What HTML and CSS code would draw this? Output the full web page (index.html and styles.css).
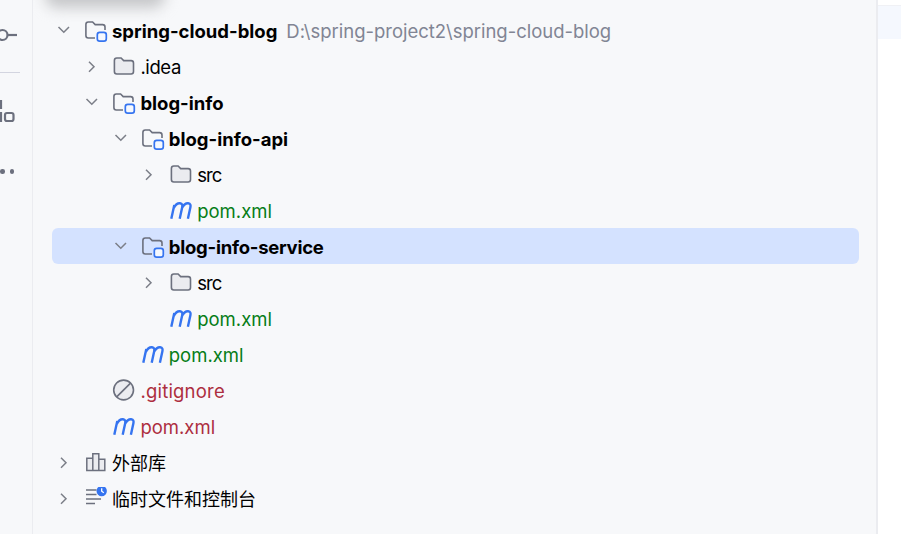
FILE: index.html
```html
<!DOCTYPE html>
<html lang="zh">
<head>
<meta charset="utf-8">
<title>Project</title>
<link rel="stylesheet" href="styles.css">
</head>
<body>
<svg class="defs" width="0" height="0">
  <defs>
    <symbol id="chev-down" viewBox="0 0 24 24"><path d="M6.500 8l5.300 5.300L17 8" fill="none" stroke="#7c7f88" stroke-width="1.500"/></symbol>
    <symbol id="chev-right" viewBox="0 0 24 24"><path d="M9 6.700l5 5-5 5" fill="none" stroke="#7c7f88" stroke-width="1.500"/></symbol>
    <symbol id="folder" viewBox="0 0 24 24"><path d="M2.400 5.400c0-1.400 1-2.400 2.400-2.400h4.300l2.600 2.600h7.400c1.400 0 2.400 1 2.400 2.400v8.600c0 1.400-1 2.400-2.400 2.400H4.800c-1.400 0-2.400-1-2.400-2.400z" fill="#ebecf0" stroke="#6c707e" stroke-width="1.600"/></symbol>
    <symbol id="module" viewBox="0 0 24 24"><path d="M11 19H4.300c-1.400 0-2.400-1-2.400-2.400V5.400C1.900 4 2.900 3 4.300 3h4.300l2.600 2.600h7.400c1.400 0 2.400 1 2.400 2.400v3" fill="none" stroke="#6c707e" stroke-width="1.600"/><rect x="13.300" y="13.300" width="9" height="8.800" rx="2.400" fill="#f5f8fe" stroke="#3574f0" stroke-width="1.700"/></symbol>
    <symbol id="maven" viewBox="0 0 24 24"><path d="M2.300 19.800L5.300 6M4.800 9C6.600 5.400 9 4 11 4.200c2.300.3 2.600 2 2.200 4l-2.500 11.600M13.100 8.600C14.900 5.400 17.200 4 19.200 4.200c2.400.3 2.600 2.100 2.200 4l-2.500 11.600" fill="none" stroke="#3574f0" stroke-width="2.400"/></symbol>
    <symbol id="ignored" viewBox="0 0 24 24"><circle cx="11.600" cy="11" r="9.900" fill="#ebecf0" stroke="#6c707e" stroke-width="1.600"/><path d="M4.700 17.900L18.500 4.100" stroke="#6c707e" stroke-width="1.600"/></symbol>
    <symbol id="library" viewBox="0 0 24 24"><path d="M2.800 7.300h6v12.200h-6zM8.800 2.800h6v16.700h-6zM14.800 8.300h6v11.200h-6z" fill="#ebecf0" stroke="#6c707e" stroke-width="1.500"/></symbol>
    <symbol id="scratch" viewBox="0 0 24 24"><path d="M2 3h10.500M2 7.500h10.500M2 12h15M2 16.500h9" fill="none" stroke="#6c707e" stroke-width="1.500"/><circle cx="17.700" cy="4" r="5.200" fill="#3574f0"/><path d="M17.700 1.300v2.900l2.100 1.500" fill="none" stroke="#fff" stroke-width="1.300"/></symbol>
  </defs>
</svg>
<div class="app">
  <aside class="rail">
    <svg class="rail-commit" width="20" height="20" viewBox="0 0 20 20"><circle cx="2.500" cy="10" r="5" fill="none" stroke="#6c707e" stroke-width="2.200"/><path d="M7.500 10h9.500" stroke="#6c707e" stroke-width="2.200"/></svg>
    <div class="rail-sep"></div>
    <svg class="rail-struct" width="16" height="26" viewBox="0 0 16 26"><path d="M-3 3h4v7H-3zM-3 15h4v8H-3z" fill="none" stroke="#6c707e" stroke-width="2.200"/><rect x="5" y="15" width="8.500" height="8" rx="2" fill="none" stroke="#6c707e" stroke-width="2.200"/></svg>
    <div class="rail-dots"><span class="dot"></span><span class="dot"></span></div>
  </aside>
  <main class="tree">
    <div class="shade"></div>
    <div class="row d0"><svg class="chev"><use href="#chev-down"/></svg><svg class="ico"><use href="#module"/></svg><span class="name bold">spring-cloud-blog</span><span class="path">D:\spring-project2\spring-cloud-blog</span></div>
    <div class="row d1"><svg class="chev"><use href="#chev-right"/></svg><svg class="ico"><use href="#folder"/></svg><span class="name tight">.idea</span></div>
    <div class="row d1"><svg class="chev"><use href="#chev-down"/></svg><svg class="ico"><use href="#module"/></svg><span class="name bold">blog-info</span></div>
    <div class="row d2"><svg class="chev"><use href="#chev-down"/></svg><svg class="ico"><use href="#module"/></svg><span class="name bold">blog-info-api</span></div>
    <div class="row d3"><svg class="chev"><use href="#chev-right"/></svg><svg class="ico"><use href="#folder"/></svg><span class="name tighter">src</span></div>
    <div class="row d3"><span class="chev"></span><svg class="ico"><use href="#maven"/></svg><span class="name green">pom.xml</span></div>
    <div class="row d2 selected"><svg class="chev"><use href="#chev-down"/></svg><svg class="ico"><use href="#module"/></svg><span class="name bold narrow">blog-info-service</span></div>
    <div class="row d3"><svg class="chev"><use href="#chev-right"/></svg><svg class="ico"><use href="#folder"/></svg><span class="name tighter">src</span></div>
    <div class="row d3"><span class="chev"></span><svg class="ico"><use href="#maven"/></svg><span class="name green">pom.xml</span></div>
    <div class="row d2"><span class="chev"></span><svg class="ico"><use href="#maven"/></svg><span class="name green">pom.xml</span></div>
    <div class="row d1"><span class="chev"></span><svg class="ico"><use href="#ignored"/></svg><span class="name red wide">.gitignore</span></div>
    <div class="row d1"><span class="chev"></span><svg class="ico"><use href="#maven"/></svg><span class="name red">pom.xml</span></div>
    <div class="row d0"><svg class="chev"><use href="#chev-right"/></svg><svg class="ico"><use href="#library"/></svg><span class="name cjk">外部库</span></div>
    <div class="row d0"><svg class="chev"><use href="#chev-right"/></svg><svg class="ico"><use href="#scratch"/></svg><span class="name cjk">临时文件和控制台</span></div>
  </main>
  <section class="editor"><div class="caret-line"></div></section>
</div>
</body>
</html>
```

FILE: styles.css
```css
* { box-sizing: border-box; }
html, body { margin: 0; height: 100%; overflow: hidden; }
body { background: #f7f8fa; font-family: Inter, "Noto Sans CJK SC", sans-serif; color: #000; }
.defs { display: block; height: 0; }
.app { display: flex; width: 901px; height: 534px; }

.rail { width: 33px; flex: none; border-right: 1px solid #ebecf0; display: flex; flex-direction: column; align-items: flex-start; padding-top: 25px; overflow: hidden; }
.rail svg { display: block; overflow: hidden; }
.rail-sep { width: 20px; height: 1px; background: #d3d5e0; margin-top: 27px; }
.rail-struct { margin-top: 25px; }
.rail-dots { display: flex; gap: 5px; margin-top: 45px; }
.dot { width: 4.500px; height: 4.500px; border-radius: 50%; background: #6c707e; }

.tree { position: relative; width: 845px; flex: none; padding: 12px 17px 0 19px; border-right: 2px solid #ebecf0; overflow: hidden; }
.shade { position: absolute; left: 12px; top: -20px; width: 120px; height: 28px; background: #c6c7c9; filter: blur(7px); border-radius: 12px; }

.row { position: relative; height: 36px; padding-top: 2px; display: flex; align-items: center; border-radius: 6px; font-size: 18.500px; white-space: nowrap; }
.d0 { padding-left: 0; }
.d1 { padding-left: 28.400px; }
.d2 { padding-left: 56.800px; }
.d3 { padding-left: 85.200px; }
.selected { background: #d4e2ff; }

.chev { width: 24px; height: 24px; flex: none; margin-right: 8px; }
.ico { width: 24px; height: 24px; flex: none; margin-right: 4px; }
.name { line-height: 24px; }
.bold { font-weight: 700; }
.path { margin-left: 9px; color: #818594; letter-spacing: -0.020px; }
.green { color: #067d17; }
.red { color: #ad2e3f; }
.cjk { font-size: 18px; padding-top: 2px; }
.tight { letter-spacing: -0.400px; }
.tighter { letter-spacing: -0.900px; }
.narrow { letter-spacing: -0.250px; }
.wide { letter-spacing: 0.200px; }

.editor { flex: 1; background: #fff; padding-top: 5px; }
.caret-line { height: 34px; background: #f5f8fe; border-top: 1px solid #f0f1f5; }
```
